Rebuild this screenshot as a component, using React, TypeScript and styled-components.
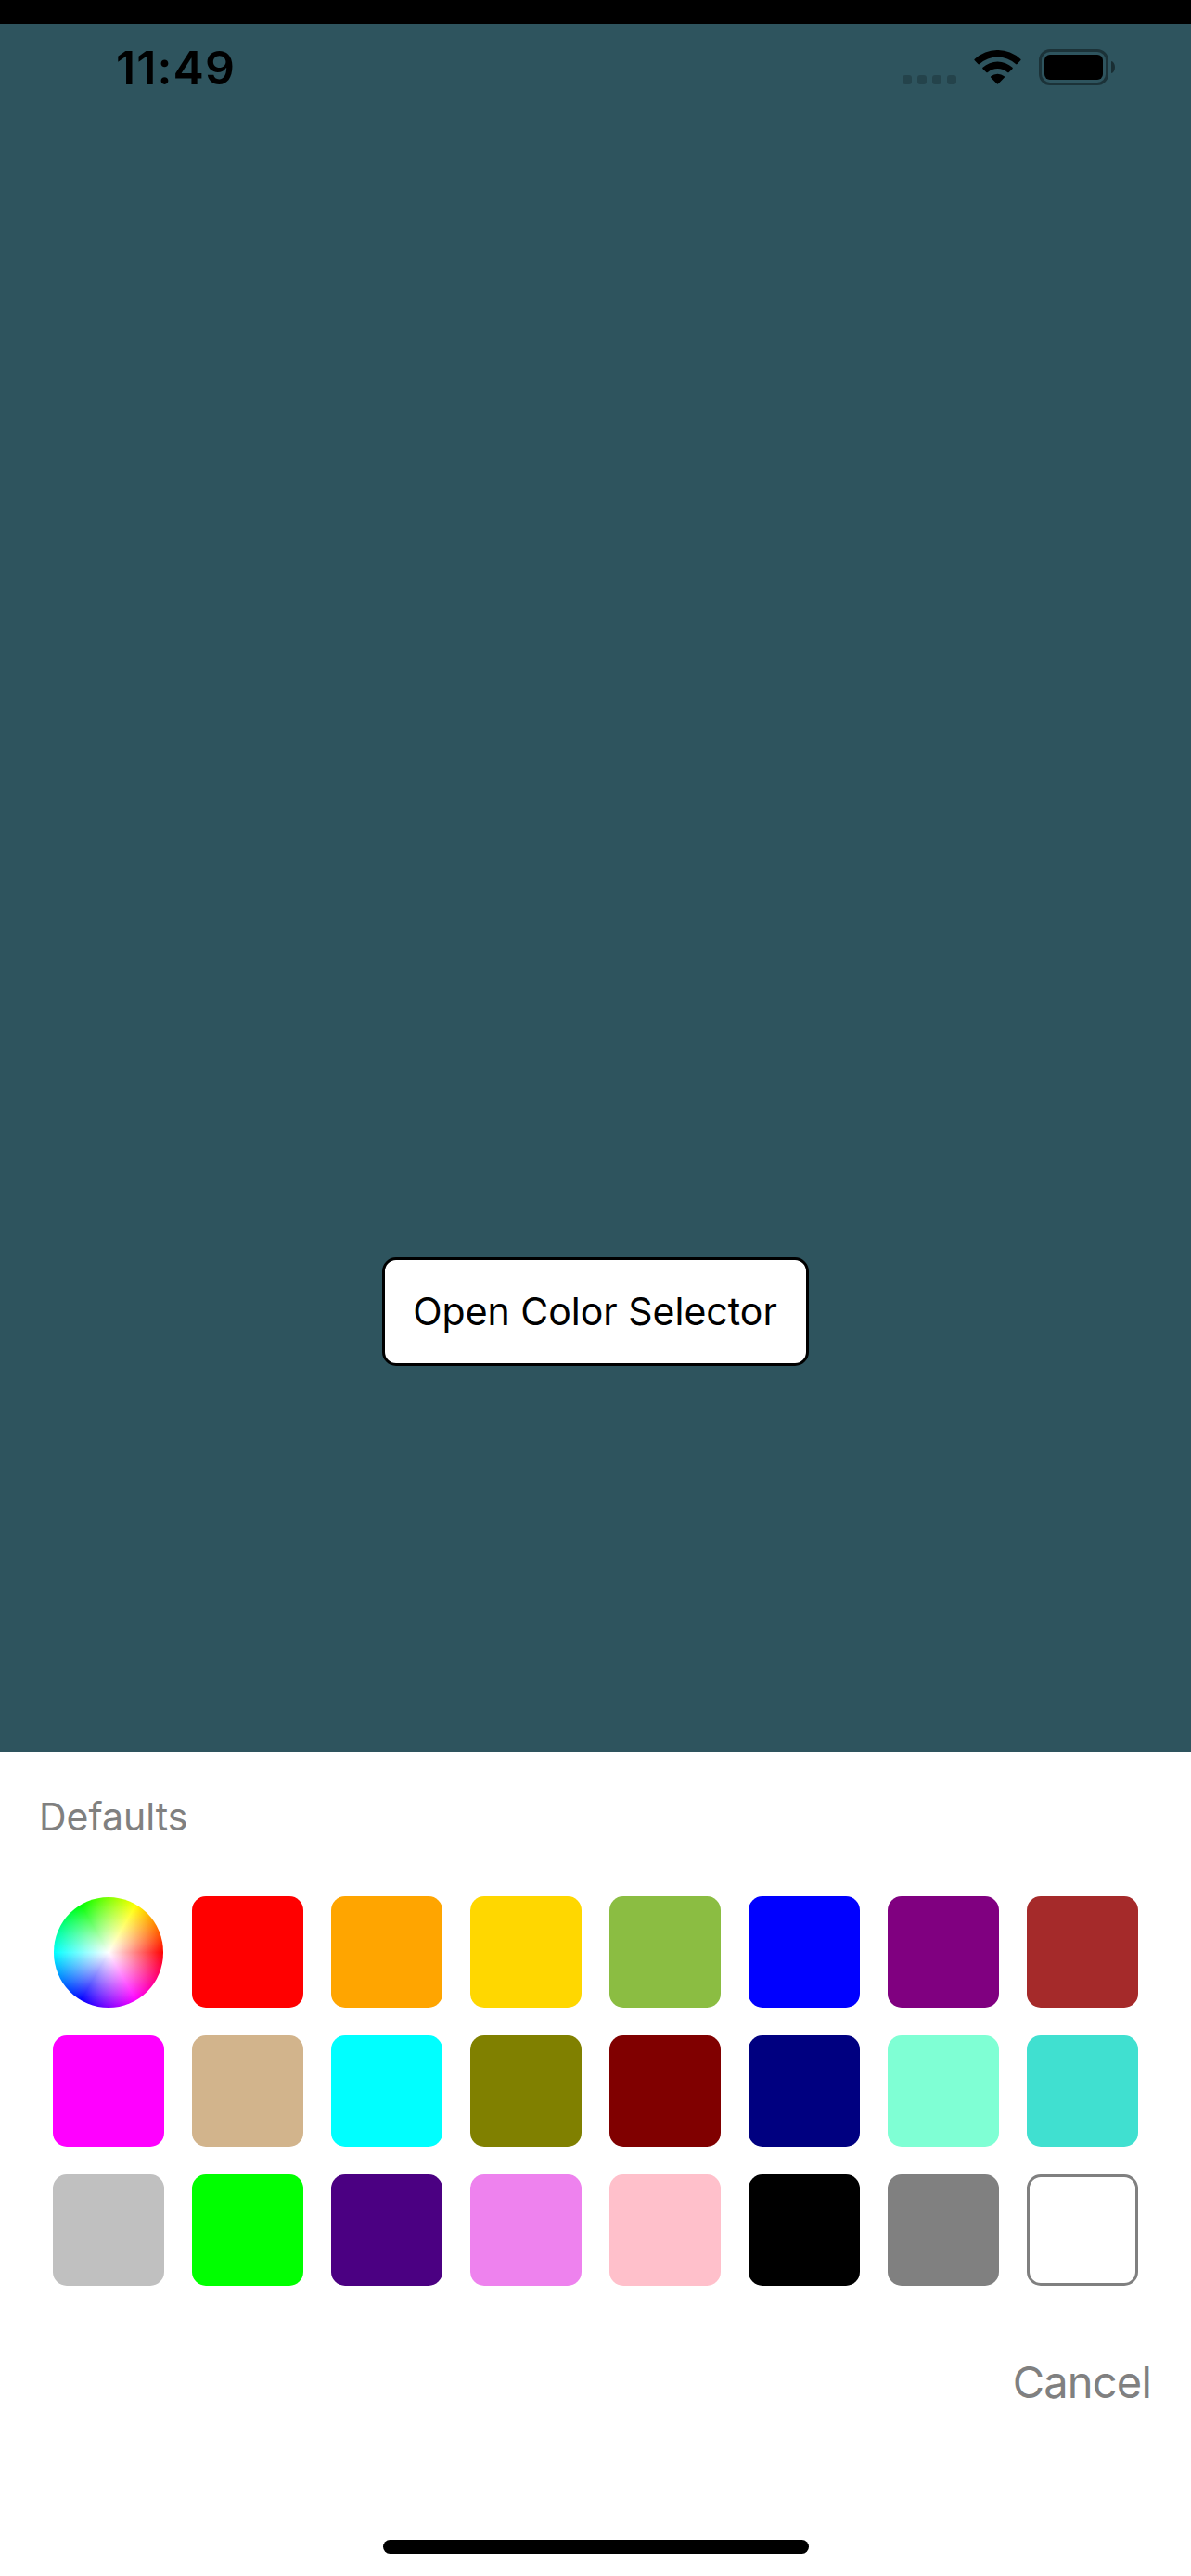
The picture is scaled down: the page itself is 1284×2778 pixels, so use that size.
import React from 'react';
import styled, { createGlobalStyle } from 'styled-components';

const GlobalStyle = createGlobalStyle`
  * { box-sizing: border-box; }
  body {
    margin: 0;
    font-family: Inter, "Liberation Sans", sans-serif;
  }
`;

const Screen = styled.div`
  width: 1284px;
  height: 2778px;
  display: flex;
  flex-direction: column;
  border-top: 26px solid #000;
  background: #2e545e;
  overflow: hidden;
`;

const StatusBar = styled.header`
  height: 115px;
  flex: none;
  display: flex;
  justify-content: space-between;
  align-items: flex-start;
  padding: 27px 82px 0 125px;
`;

const Time = styled.time`
  font-size: 50px;
  font-weight: 600;
  line-height: 40px;
  letter-spacing: 1.1px;
  color: #000;
`;

const StatusIcons = styled.div`
  display: flex;
  align-items: flex-start;
`;

const SignalDots = styled.div`
  display: flex;
  gap: 6px;
  margin: 28px 19px 0 0;
`;

const Dot = styled.span`
  width: 10px;
  height: 10px;
  border-radius: 3px;
  background: rgba(0, 0, 0, 0.2);
`;

const WifiIcon = styled.svg`
  width: 52px;
  height: 38px;
  margin: 1px 18px 0 0;
`;

const Battery = styled.div`
  width: 75px;
  height: 39px;
  padding: 3px;
  border: 3px solid rgba(0, 0, 0, 0.4);
  border-radius: 12px;
`;

const BatteryLevel = styled.div`
  height: 100%;
  border-radius: 6px;
  background: #000;
`;

const BatteryTip = styled.span`
  width: 4px;
  height: 13px;
  margin: 13px 0 0 3px;
  border-radius: 0 4px 4px 0 / 0 6.5px 6.5px 0;
  background: rgba(0, 0, 0, 0.45);
`;

const Content = styled.main`
  flex: 1;
  display: flex;
  justify-content: center;
  align-items: flex-start;
  padding-top: 1215px;
`;

const OpenButton = styled.button`
  width: 460px;
  height: 117px;
  padding: 0 1px 2px 0;
  border: 3px solid #000;
  border-radius: 15px;
  background: #fff;
  color: #000;
  font-family: inherit;
  font-size: 41px;
  line-height: 50px;
  white-space: nowrap;
`;

const Sheet = styled.section`
  height: 889px;
  flex: none;
  display: flex;
  flex-direction: column;
  padding: 45px 42px 24px;
  background: #fff;
  color: #808080;
`;

const SheetTitle = styled.h2`
  margin: 0;
  font-size: 41px;
  font-weight: 400;
  line-height: 50px;
`;

const Palette = styled.div`
  display: grid;
  grid-template-columns: repeat(8, 120px);
  grid-auto-rows: 120px;
  gap: 30px;
  margin: 61px 15px 0;
`;

const Swatch = styled.button<{ $color: string; $outlined?: boolean }>`
  padding: 0;
  border: ${({ $outlined }) => ($outlined ? '3px solid #808080' : 'none')};
  border-radius: 15px;
  background: ${({ $color }) => $color};
`;

const ColorWheel = styled.button`
  padding: 0;
  margin: 0.5px 1px 0.5px 0.5px;
  border: none;
  border-radius: 50%;
  background:
    radial-gradient(closest-side, #fff, rgba(255, 255, 255, 0)),
    conic-gradient(from 90deg, #f00, #f0f, #00f, #0ff, #0f0, #ff0, #f00);
`;

const CancelButton = styled.button`
  align-self: flex-end;
  margin: 75px 1px 0 0;
  padding: 0;
  border: none;
  background: none;
  color: inherit;
  font-family: inherit;
  font-size: 47px;
  letter-spacing: -0.8px;
  line-height: 58px;
`;

const HomeIndicator = styled.div`
  width: 459px;
  height: 15px;
  margin: auto auto 0;
  border-radius: 8px;
  background: #000;
`;

const colors = [
  'red', 'orange', 'gold', '#8bbd42', 'blue', 'purple', 'brown',
  'magenta', 'tan', 'cyan', 'olive', 'maroon', 'navy', 'aquamarine', 'turquoise',
  'silver', 'lime', 'indigo', 'violet', 'pink', 'black', 'gray', 'white',
];

export default function App() {
  return (
    <Screen>
      <GlobalStyle />
      <StatusBar>
        <Time>11:49</Time>
        <StatusIcons>
          <SignalDots>
            {[0, 1, 2, 3].map((dot) => <Dot key={dot} />)}
          </SignalDots>
          <WifiIcon viewBox="0 0 52 38" aria-hidden="true">
            <path d="M.8 9.8A36 36 0 0 1 50.2 9.8Q51 10.5 50.2 11.3L46.6 15Q45.8 15.8 45 15A29 29 0 0 0 6 15Q5.2 15.8 4.4 15L.8 11.3Q0 10.5 .8 9.8Z" />
            <path d="M9.5 18.7A24 24 0 0 1 41.5 18.7Q42.3 19.4 41.5 20.2L37.7 23.9Q36.9 24.6 36.1 23.9A16 16 0 0 0 14.900 23.9Q14.1 24.6 13.3 23.9L9.5 20.2Q8.700 19.4 9.5 18.7Z" />
            <path d="M18.3 28.3A11.5 11.5 0 0 1 32.7 28.3Q33.5 29 32.7 29.8L26.3 36.3Q25.5 37.1 24.700 36.3L18.3 29.8Q17.5 29 18.3 28.3Z" />
          </WifiIcon>
          <Battery><BatteryLevel /></Battery>
          <BatteryTip />
        </StatusIcons>
      </StatusBar>
      <Content>
        <OpenButton>Open Color Selector</OpenButton>
      </Content>
      <Sheet>
        <SheetTitle>Defaults</SheetTitle>
        <Palette>
          <ColorWheel aria-label="Custom color" />
          {colors.map((color) => (
            <Swatch key={color} $color={color} $outlined={color === 'white'} aria-label={color} />
          ))}
        </Palette>
        <CancelButton>Cancel</CancelButton>
        <HomeIndicator />
      </Sheet>
    </Screen>
  );
}
